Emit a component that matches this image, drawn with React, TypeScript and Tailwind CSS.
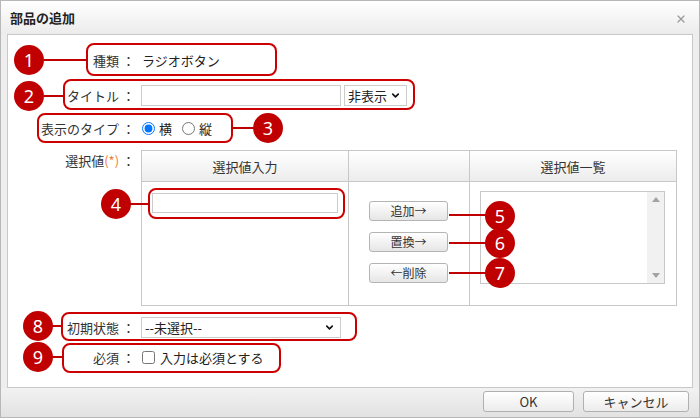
import { ChevronDown, X } from 'lucide-react';

/* 部品の追加 — ラジオボタン設定ダイアログ（注釈つきスクリーンショット） */

const jp = "font-['Noto_Sans_CJK_JP',sans-serif]";

function Label({ children }: { children: React.ReactNode }) {
  return (
    <div className="w-[127px] shrink-0 text-right pr-0 text-[13px] text-[#333] leading-none">
      {children}
    </div>
  );
}

function FakeSelect({ text, width }: { text: string; width: string }) {
  return (
    <div
      className={`${width} h-[21px] border border-[#ccc] bg-white flex items-center justify-between pl-[3px] pr-[5px] text-[13px] text-[#222]`}
    >
      <span className="leading-none">{text}</span>
      <ChevronDown size={11} strokeWidth={3.5} className="text-[#111]" />
    </div>
  );
}

function TableButton({ children }: { children: React.ReactNode }) {
  return (
    <div className="w-[79px] h-[20px] border border-[#b4b4b4] rounded-[3px] bg-gradient-to-b from-white to-[#e6e6e6] flex items-center justify-center text-[12px] text-[#333] leading-none">
      {children}
    </div>
  );
}

function Circle({ n, left, top }: { n: number; left: number; top: number }) {
  return (
    <div
      className="absolute w-[30px] h-[30px] rounded-full bg-[#c00000] text-white flex items-center justify-center text-[18px] font-['Noto_Sans',sans-serif] leading-none"
      style={{ left, top }}
    >
      {n}
    </div>
  );
}

function Line({ x1, x2, y }: { x1: number; x2: number; y: number }) {
  return <div className="absolute h-[2px] bg-[#c00000]" style={{ left: x1, width: x2 - x1, top: y - 1 }} />;
}

function Box({ x1, x2, y1, y2 }: { x1: number; x2: number; y1: number; y2: number }) {
  return (
    <div
      className="absolute border-2 border-[#cc0000] rounded-[8px]"
      style={{ left: x1, top: y1, width: x2 - x1, height: y2 - y1 }}
    />
  );
}

export default function App() {
  return (
    <div className={`relative w-[700px] h-[418px] border border-[#b8b8b8] bg-[#eeeeee] ${jp} flex flex-col`}>
      {/* タイトルバー */}
      <div className="h-[33px] shrink-0 bg-gradient-to-b from-white to-[#ececec] flex items-center justify-between pl-[9px] pr-[12px]">
        <span className="text-[13px] font-bold text-[#222] leading-none">部品の追加</span>
        <X size={12} strokeWidth={2.5} className="text-[#9a9a9a] mt-[3px]" />
      </div>

      {/* 本体 */}
      <div className="mx-[6px] h-[354px] shrink-0 border border-[#c8c8c8] bg-white flex flex-col pt-[10px]">
        <div className="h-[30px] flex items-center">
          <Label>種類 ：</Label>
          <span className="ml-[7px] text-[13px] text-[#222] leading-none">ラジオボタン</span>
        </div>

        <div className="mt-[5px] h-[30px] flex items-center">
          <Label>タイトル ：</Label>
          <div className="ml-[6px] w-[200px] h-[21px] border border-[#ccc] bg-white" />
          <div className="ml-[3px]">
            <FakeSelect text="非表示" width="w-[63px]" />
          </div>
        </div>

        <div className="mt-[3px] h-[30px] flex items-center">
          <Label>表示のタイプ ：</Label>
          <label className="ml-[7px] flex items-center gap-[4px] text-[13px] text-[#222] leading-none">
            <input type="radio" name="dir" defaultChecked className="m-0 w-[13px] h-[13px]" />
            横
          </label>
          <label className="ml-[10px] flex items-center gap-[4px] text-[13px] text-[#222] leading-none">
            <input type="radio" name="dir" className="m-0 w-[13px] h-[13px]" />
            縦
          </label>
        </div>

        <div className="mt-[7px] flex">
          <div className="pt-[4px]">
            <Label>
              選択値<span className="text-[#f08030]">(*)</span> ：
            </Label>
          </div>
          <div className="ml-[6px] w-[536px] h-[156px] border border-[#c8c8c8] grid grid-cols-[206px_121px_1fr] grid-rows-[31px_1fr]">
            <div className="border-b border-[#c8c8c8] bg-gradient-to-b from-white to-[#ececec] flex items-center justify-center text-[13px] text-[#333] leading-none">
              選択値入力
            </div>
            <div className="border-b border-l border-[#c8c8c8] bg-gradient-to-b from-white to-[#ececec]" />
            <div className="border-b border-l border-[#c8c8c8] bg-gradient-to-b from-white to-[#ececec] flex items-center justify-center text-[13px] text-[#333] leading-none">
              選択値一覧
            </div>

            <div className="pl-[10px] pt-[11px]">
              <div className="w-[186px] h-[20px] border border-[#ccc] bg-white" />
            </div>
            <div className="border-l border-[#c8c8c8] pl-[20px] pt-[19px] flex flex-col gap-[11px]">
              <TableButton>追加→</TableButton>
              <TableButton>置換→</TableButton>
              <TableButton>←削除</TableButton>
            </div>
            <div className="border-l border-[#c8c8c8] pl-[10px] pt-[9px]">
              <div className="w-[185px] h-[93px] border border-[#c8c8c8] bg-white flex justify-end">
                <div className="w-[17px] h-full bg-[#f1f1f1] flex flex-col items-center justify-between py-[5px]">
                  <svg width="8" height="5" viewBox="0 0 8 5">
                    <path d="M4 0 L8 5 L0 5 Z" fill="#a3a3a3" />
                  </svg>
                  <svg width="8" height="5" viewBox="0 0 8 5">
                    <path d="M0 0 L8 0 L4 5 Z" fill="#a3a3a3" />
                  </svg>
                </div>
              </div>
            </div>
          </div>
        </div>

        <div className="mt-[6px] h-[30px] flex items-center">
          <Label>初期状態 ：</Label>
          <div className="ml-[6px]">
            <FakeSelect text="--未選択--" width="w-[200px]" />
          </div>
        </div>

        <div className="h-[30px] flex items-center">
          <Label>必須 ：</Label>
          <label className="ml-[7px] flex items-center gap-[5px] text-[13px] text-[#222] leading-none">
            <input type="checkbox" className="m-0 w-[13px] h-[13px]" />
            入力は必須とする
          </label>
        </div>
      </div>

      {/* フッター */}
      <div className="flex-1 bg-gradient-to-b from-[#f2f2f2] to-[#e2e2e2] flex justify-end items-start pt-[3px] pr-[10px] gap-[9px]">
        <div className="w-[91px] h-[21px] border border-[#b0b0b0] rounded-[3px] bg-gradient-to-b from-white to-[#ececec] flex items-center justify-center text-[13px] text-[#333] leading-none">
          OK
        </div>
        <div className="w-[106px] h-[21px] border border-[#b0b0b0] rounded-[3px] bg-gradient-to-b from-white to-[#ececec] flex items-center justify-center text-[13px] text-[#333] leading-none">
          キャンセル
        </div>
      </div>

      {/* 注釈 */}
      <div className="absolute -left-px -top-px w-[700px] h-[418px] pointer-events-none">
        <Box x1={86} x2={277} y1={43} y2={76} />
        <Box x1={63} x2={415} y1={79} y2={110} />
        <Box x1={37} x2={233} y1={113} y2={143} />
        <Box x1={148} x2={345} y1={188} y2={219} />
        <Box x1={61} x2={357} y1={312} y2={341} />
        <Box x1={62} x2={281} y1={343} y2={373} />

        <Line x1={44} x2={87} y={60} />
        <Line x1={44} x2={64} y={96} />
        <Line x1={232} x2={254} y={128} />
        <Line x1={130} x2={149} y={204} />
        <Line x1={449} x2={486} y={215} />
        <Line x1={449} x2={486} y={243} />
        <Line x1={449} x2={486} y={273} />
        <Line x1={52} x2={62} y={326} />
        <Line x1={52} x2={63} y={357} />

        <Circle n={1} left={14} top={45} />
        <Circle n={2} left={14} top={81} />
        <Circle n={3} left={253} top={113} />
        <Circle n={4} left={101} top={189} />
        <Circle n={5} left={485} top={201} />
        <Circle n={6} left={485} top={228} />
        <Circle n={7} left={485} top={258} />
        <Circle n={8} left={23} top={311} />
        <Circle n={9} left={23} top={342} />
      </div>
    </div>
  );
}
